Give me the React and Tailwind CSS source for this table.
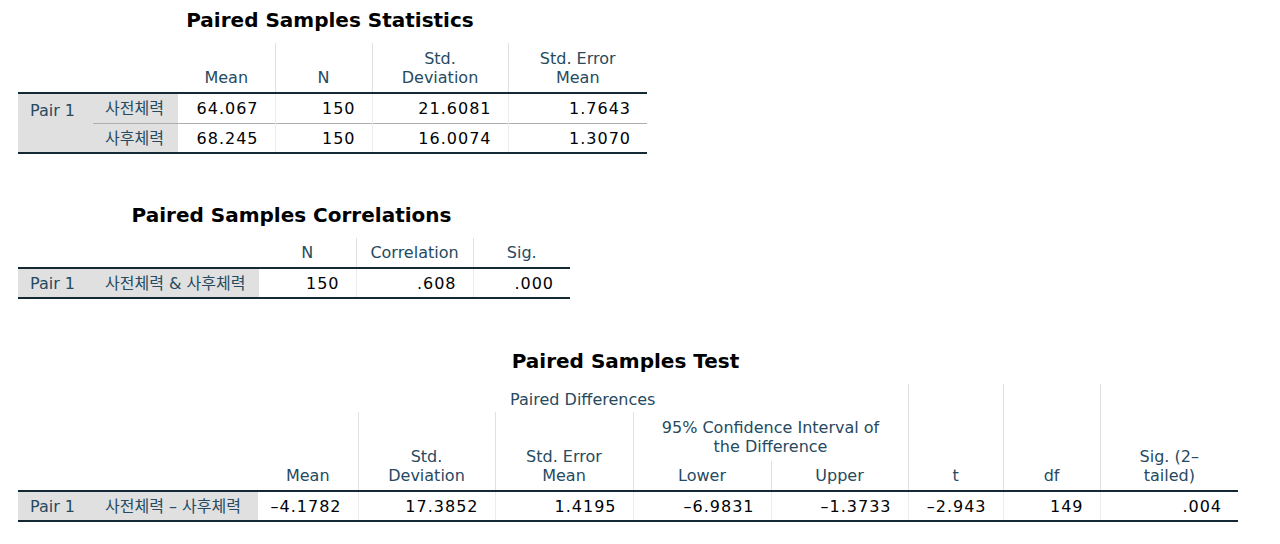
import React from "react";

const font = { fontFamily: '"DejaVu Sans", "Noto Sans CJK KR", sans-serif' };

const th = "text-[#264a60] font-normal text-center align-bottom px-1 pb-[5px] leading-[19px]";
const sep = "border-l border-[#e0e0e0]";
const rowHead = "bg-[#e0e0e0] text-[#264a60] font-normal text-left align-middle px-3 pt-[2px] whitespace-nowrap";
const num = "text-right text-[#010205] pr-4 pt-[2px] tracking-[1px] whitespace-nowrap";
const numSep = "border-l border-[#ececec]";

const Title = ({ children }) => (
  <div className="text-center text-[20px] leading-[24px] font-bold text-black mb-[11px] pr-[5px]">
    {children}
  </div>
);

const StatsTable = () => (
  <div className="w-[629px]">
    <Title>Paired Samples Statistics</Title>
    <table className="table-fixed border-collapse w-[629px] text-[16px]">
      <colgroup>
        <col className="w-[75px]" />
        <col className="w-[85px]" />
        <col className="w-[97px]" />
        <col className="w-[97px]" />
        <col className="w-[136px]" />
        <col className="w-[139px]" />
      </colgroup>
      <thead>
        <tr className="h-[50px] border-b-2 border-[#152935]">
          <th colSpan={2}></th>
          <th className={th}>Mean</th>
          <th className={`${th} ${sep}`}>N</th>
          <th className={`${th} ${sep}`}>
            Std.
            <br />
            Deviation
          </th>
          <th className={`${th} ${sep}`}>
            Std. Error
            <br />
            Mean
          </th>
        </tr>
      </thead>
      <tbody>
        <tr className="h-[30px]">
          <th rowSpan={2} className={`${rowHead} align-top pt-[5px]`}>
            Pair 1
          </th>
          <th className={rowHead}>사전체력</th>
          <td className={num}>64.067</td>
          <td className={`${num} ${numSep}`}>150</td>
          <td className={`${num} ${numSep}`}>21.6081</td>
          <td className={`${num} ${numSep}`}>1.7643</td>
        </tr>
        <tr className="h-[30px] border-t border-[#aeaeae] border-b-2 border-b-[#152935]">
          <th className={rowHead}>사후체력</th>
          <td className={num}>68.245</td>
          <td className={`${num} ${numSep}`}>150</td>
          <td className={`${num} ${numSep}`}>16.0074</td>
          <td className={`${num} ${numSep}`}>1.3070</td>
        </tr>
      </tbody>
    </table>
  </div>
);

const CorrTable = () => (
  <div className="w-[552px] mt-[49px]">
    <Title>Paired Samples Correlations</Title>
    <table className="table-fixed border-collapse w-[552px] text-[16px]">
      <colgroup>
        <col className="w-[75px]" />
        <col className="w-[166px]" />
        <col className="w-[97px]" />
        <col className="w-[117px]" />
        <col className="w-[97px]" />
      </colgroup>
      <thead>
        <tr className="h-[30px] border-b-2 border-[#152935]">
          <th colSpan={2}></th>
          <th className={th}>N</th>
          <th className={`${th} ${sep}`}>Correlation</th>
          <th className={`${th} ${sep}`}>Sig.</th>
        </tr>
      </thead>
      <tbody>
        <tr className="h-[30px] border-b-2 border-[#152935]">
          <th className={rowHead}>Pair 1</th>
          <th className={rowHead}>사전체력 &amp; 사후체력</th>
          <td className={num}>150</td>
          <td className={`${num} ${numSep}`}>.608</td>
          <td className={`${num} ${numSep}`}>.000</td>
        </tr>
      </tbody>
    </table>
  </div>
);

const TestTable = () => (
  <div className="w-[1220px] mt-[50px]">
    <Title>Paired Samples Test</Title>
    <table className="table-fixed border-collapse w-[1220px] text-[16px]">
      <colgroup>
        <col className="w-[75px]" />
        <col className="w-[165px]" />
        <col className="w-[100px]" />
        <col className="w-[137px]" />
        <col className="w-[138px]" />
        <col className="w-[138px]" />
        <col className="w-[137px]" />
        <col className="w-[95px]" />
        <col className="w-[97px]" />
        <col className="w-[138px]" />
      </colgroup>
      <thead>
        <tr className="h-[28px]">
          <th colSpan={2} rowSpan={3}></th>
          <th colSpan={5} className="text-[#264a60] font-normal text-center align-middle leading-[19px] pt-[2px]">
            Paired Differences
          </th>
          <th rowSpan={3} className={`${th} ${sep}`}>t</th>
          <th rowSpan={3} className={`${th} ${sep}`}>df</th>
          <th rowSpan={3} className={`${th} ${sep}`}>
            Sig. (2–
            <br />
            tailed)
          </th>
        </tr>
        <tr className="h-[49px]">
          <th rowSpan={2} className={th}>Mean</th>
          <th rowSpan={2} className={`${th} ${sep}`}>
            Std.
            <br />
            Deviation
          </th>
          <th rowSpan={2} className={`${th} ${sep}`}>
            Std. Error
            <br />
            Mean
          </th>
          <th colSpan={2} className={`${th} ${sep} pb-[4px]`}>
            95% Confidence Interval of
            <br />
            the Difference
          </th>
        </tr>
        <tr className="h-[30px] border-b-2 border-[#152935]">
          <th className={`${th} ${sep}`}>Lower</th>
          <th className={`${th} ${sep}`}>Upper</th>
        </tr>
      </thead>
      <tbody>
        <tr className="h-[30px] border-b-2 border-[#152935]">
          <th className={rowHead}>Pair 1</th>
          <th className={rowHead}>사전체력 – 사후체력</th>
          <td className={num}>–4.1782</td>
          <td className={`${num} ${numSep}`}>17.3852</td>
          <td className={`${num} ${numSep}`}>1.4195</td>
          <td className={`${num} ${numSep}`}>–6.9831</td>
          <td className={`${num} ${numSep}`}>–1.3733</td>
          <td className={`${num} ${numSep}`}>–2.943</td>
          <td className={`${num} ${numSep}`}>149</td>
          <td className={`${num} ${numSep}`}>.004</td>
        </tr>
      </tbody>
    </table>
  </div>
);

export default function App() {
  return (
    <div className="w-[1280px] h-[544px] bg-white overflow-hidden pl-[18px] pt-[8px]" style={font}>
      <StatsTable />
      <CorrTable />
      <TestTable />
    </div>
  );
}
